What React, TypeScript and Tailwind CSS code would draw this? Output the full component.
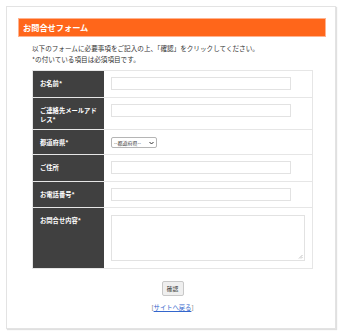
import React from "react";

const rows: { label: string; h: number; kind: "input" | "select" | "textarea" }[] = [
  { label: "お名前*", h: 27, kind: "input" },
  { label: "ご連絡先メールアドレス*", h: 32, kind: "input" },
  { label: "都道府県*", h: 25, kind: "select" },
  { label: "ご住所", h: 27, kind: "input" },
  { label: "お電話番号*", h: 26, kind: "input" },
  { label: "お問合せ内容*", h: 61, kind: "textarea" },
];

export default function App() {
  return (
    <div
      className="bg-white w-[339px] h-[331px] p-[6px]"
      style={{ fontFamily: '"Noto Sans CJK JP", "Noto Sans", sans-serif' }}
    >
      <div className="w-[330px] h-[323px] border border-[#e3e3e3] shadow-[1px_1px_1px_rgba(0,0,0,0.12)] bg-white pt-[11px] pl-[11px]">
        <div className="w-[308px] h-[19px] bg-[#ff661a] border border-[#ffb38f] flex items-center pl-[4px]">
          <span className="text-white font-bold text-[8.2px] leading-none">お問合せフォーム</span>
        </div>
        <div className="ml-[14px] mt-[6px] text-[6.6px] leading-[11px] text-[#333]">
          <p>以下のフォームに必要事項をご記入の上、「確認」をクリックしてください。</p>
          <p>*の付いている項目は必須項目です。</p>
        </div>
        <div className="ml-[14px] mt-[5px] w-[281px] border border-[#e6e6e6]">
          {rows.map((r, i) => (
            <div
              key={i}
              className={`flex ${i > 0 ? "border-t border-[#e6e6e6]" : ""}`}
              style={{ height: r.h - (i > 0 ? 0 : 1) }}
            >
              <div className="w-[71px] shrink-0 bg-[#404040] pl-[7px] pr-[6px] pt-[8px] text-white font-bold text-[6.3px] leading-[9px]">
                {r.label}
              </div>
              <div className="flex-1 pl-[7px] flex items-start pt-[6px]">
                {r.kind === "input" && (
                  <div className="w-[180px] h-[13px] border border-[#e2e2e2] bg-white" />
                )}
                {r.kind === "select" && (
                  <div className="mt-[1px] w-[46px] h-[11px] border border-[#b5b5b5] rounded-[2px] bg-white flex items-center justify-between px-[2px] text-[5px] leading-none text-[#333]">
                    <span>--都道府県--</span>
                    <svg width="5" height="4" viewBox="0 0 10 8">
                      <path d="M1 2 L5 6 L9 2" stroke="#333" strokeWidth="2" fill="none" />
                    </svg>
                  </div>
                )}
                {r.kind === "textarea" && (
                  <div className="relative mt-[1px] w-[194px] h-[46px] border border-[#e2e2e2] bg-white">
                    <svg className="absolute right-[1px] bottom-[1px]" width="5" height="5" viewBox="0 0 10 10">
                      <path d="M9 2 L2 9 M9 6 L6 9" stroke="#999" strokeWidth="1.2" />
                    </svg>
                  </div>
                )}
              </div>
            </div>
          ))}
        </div>
        <div className="w-[281px] ml-[14px] flex flex-col items-center mt-[12px]">
          <div className="w-[22px] h-[15px] bg-[#efefef] border border-[#c8c8c8] rounded-[2px] flex items-center justify-center text-[5.8px] text-[#333] leading-none">
            確認
          </div>
          <div className="mt-[7px] text-[6.3px] leading-[9px] text-[#666]">
            [<span className="text-[#3366cc] underline">サイトへ戻る</span>]
          </div>
        </div>
      </div>
    </div>
  );
}
